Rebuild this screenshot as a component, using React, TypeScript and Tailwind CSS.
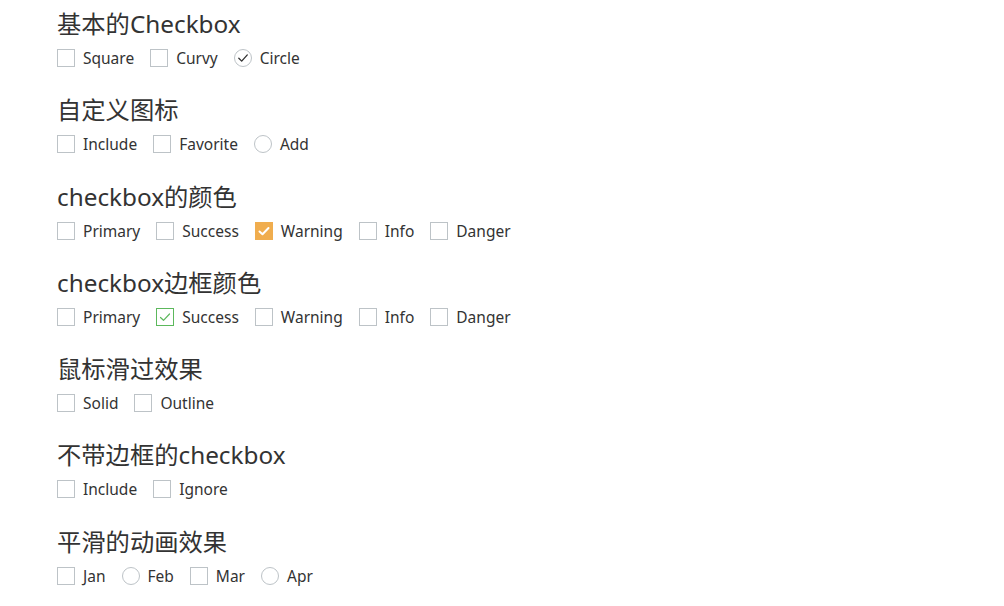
import React from "react";

type Kind = "square" | "circle";
type Item = {
  label: string;
  kind?: Kind;
  state?: "none" | "warning" | "success" | "circle";
};

const sections: { title: string; items: Item[] }[] = [
  {
    title: "基本的Checkbox",
    items: [
      { label: "Square" },
      { label: "Curvy" },
      { label: "Circle", kind: "circle", state: "circle" },
    ],
  },
  {
    title: "自定义图标",
    items: [{ label: "Include" }, { label: "Favorite" }, { label: "Add", kind: "circle" }],
  },
  {
    title: "checkbox的颜色",
    items: [
      { label: "Primary" },
      { label: "Success" },
      { label: "Warning", state: "warning" },
      { label: "Info" },
      { label: "Danger" },
    ],
  },
  {
    title: "checkbox边框颜色",
    items: [
      { label: "Primary" },
      { label: "Success", state: "success" },
      { label: "Warning" },
      { label: "Info" },
      { label: "Danger" },
    ],
  },
  {
    title: "鼠标滑过效果",
    items: [{ label: "Solid" }, { label: "Outline" }],
  },
  {
    title: "不带边框的checkbox",
    items: [{ label: "Include" }, { label: "Ignore" }],
  },
  {
    title: "平滑的动画效果",
    items: [
      { label: "Jan" },
      { label: "Feb", kind: "circle" },
      { label: "Mar" },
      { label: "Apr", kind: "circle" },
    ],
  },
];

function Box({ item }: { item: Item }) {
  const kind = item.kind ?? "square";
  const state = item.state ?? "none";
  if (kind === "circle") {
    return (
      <span className="relative flex h-[18px] w-[18px] shrink-0 items-center justify-center rounded-full border border-[#bdc3c7] bg-white">
        {state === "circle" && (
          <svg width="12" height="12" viewBox="0 0 12 12" fill="none">
            <polyline points="1.8,6.3 4.7,9.1 10.3,2.9" stroke="#2f2f2f" strokeWidth="1.3" strokeLinecap="round" strokeLinejoin="round" />
          </svg>
        )}
      </span>
    );
  }
  if (state === "warning") {
    return (
      <span className="flex h-[18px] w-[18px] shrink-0 items-center justify-center border border-[#f0ad4e] bg-[#f0ad4e]">
        <svg width="14" height="14" viewBox="0 0 14 14" fill="none">
          <polyline points="2.5,7.5 5.5,10.3 11.5,4" stroke="#ffffff" strokeWidth="2" strokeLinecap="round" strokeLinejoin="round" />
        </svg>
      </span>
    );
  }
  if (state === "success") {
    return (
      <span className="flex h-[18px] w-[18px] shrink-0 items-center justify-center border border-[#5cb85c] bg-white">
        <svg width="14" height="14" viewBox="0 0 14 14" fill="none">
          <polyline points="2.5,7.5 5.5,10.3 11.5,4" stroke="#5cb85c" strokeWidth="1.2" strokeLinecap="round" strokeLinejoin="round" />
        </svg>
      </span>
    );
  }
  return <span className="h-[18px] w-[18px] shrink-0 border border-[#bdc3c7] bg-white" />;
}

export default function App() {
  return (
    <div
      className="min-h-[606px] w-full bg-white pl-[57px] pt-[6px] text-[#333333]"
      style={{ fontFamily: '"Noto Sans", "Noto Sans CJK SC", sans-serif' }}
    >
      {sections.map((s, i) => (
        <section key={i} className="mb-[18.3px]">
          <h2 className="h-[36px] text-[24.3px] font-normal leading-[36px]">{s.title}</h2>
          <div className="flex h-[32px] items-center">
            {s.items.map((it, j) => (
              <label key={j} className="mr-4 flex items-center">
                <Box item={it} />
                <span className="pl-[8px] text-[15.5px] leading-[20px]">{it.label}</span>
              </label>
            ))}
          </div>
        </section>
      ))}
    </div>
  );
}
